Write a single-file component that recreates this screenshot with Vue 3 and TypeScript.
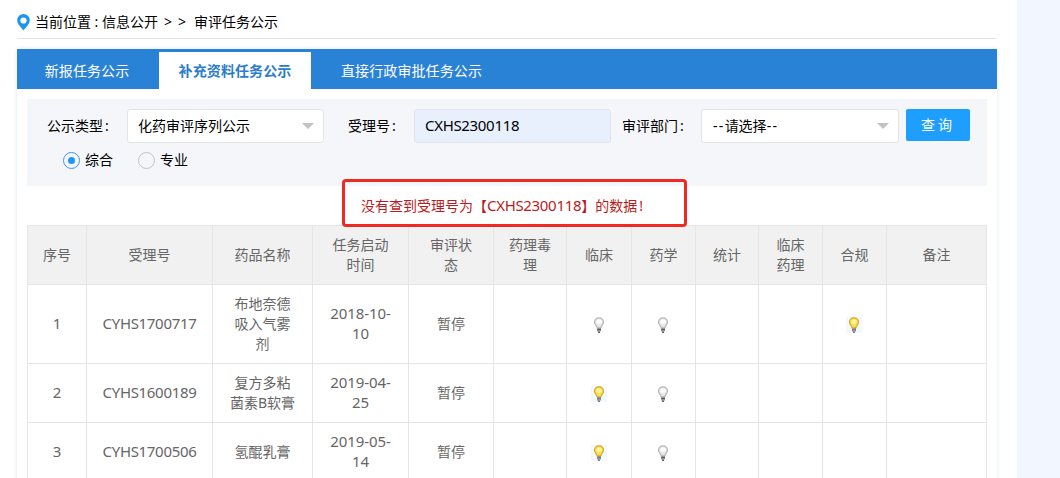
<script setup lang="ts">
import { ref } from 'vue'

type Lamp = 'on' | 'off' | ''
interface Row {
  id: number
  code: string
  name: string[]
  date: string[]
  status: string
  lamps: Lamp[]
}

const tabs = ['新报任务公示', '补充资料任务公示', '直接行政审批任务公示']
const activeTab = ref(1)
const scopes = ['综合', '专业']
const scope = ref(0)
const code = ref('CXHS2300118')

const widths = [59, 126, 100, 96, 85, 73, 65, 64, 63, 64, 64, 100]
const headers: string[][] = [
  ['序号'], ['受理号'], ['药品名称'], ['任务启动', '时间'], ['审评状', '态'], ['药理毒', '理'],
  ['临床'], ['药学'], ['统计'], ['临床', '药理'], ['合规'], ['备注'],
]
const rows: Row[] = [
  { id: 1, code: 'CYHS1700717', name: ['布地奈德', '吸入气雾', '剂'], date: ['2018-10-', '10'], status: '暂停', lamps: ['', 'off', 'off', '', '', 'on', ''] },
  { id: 2, code: 'CYHS1600189', name: ['复方多粘', '菌素B软膏'], date: ['2019-04-', '25'], status: '暂停', lamps: ['', 'on', 'off', '', '', '', ''] },
  { id: 3, code: 'CYHS1700506', name: ['氢醌乳膏'], date: ['2019-05-', '14'], status: '暂停', lamps: ['', 'on', 'off', '', '', '', ''] },
]
</script>

<template>
  <div class="page">
    <main class="sheet">
      <nav class="crumbs">
        <svg class="pin" width="13" height="17" viewBox="0 0 13 17">
          <path fill="#1e96ee" fill-rule="evenodd" d="M6.5 0A6.3 6.3 0 0 0 .2 6.3C.2 10 3.5 12.500 6.500 16.500 9.500 12.500 12.800 10 12.800 6.300A6.300 6.300 0 0 0 6.500 0ZM6.500 3.400A3.100 3.100 0 1 1 6.500 9.600 3.100 3.100 0 0 1 6.500 3.400Z" />
        </svg>
        <span>当前位置</span><span class="colon">:</span><span>信息公开</span>
        <span class="arrow first">&gt;</span><span class="arrow">&gt;</span><span>审评任务公示</span>
      </nav>

      <section class="panel">
        <div class="tabs">
          <button
            v-for="(tab, i) in tabs"
            :key="tab"
            class="tab"
            :class="{ active: i === activeTab }"
            @click="activeTab = i"
          >{{ tab }}</button>
        </div>

        <form class="filters" @submit.prevent>
          <div class="fields">
            <label class="label type">公示类型<i>:</i></label>
            <div class="select">化药审评序列公示<span class="caret"></span></div>
            <label class="label number">受理号<i>:</i></label>
            <input v-model="code" class="input latin" />
            <label class="label dept">审评部门<i>:</i></label>
            <div class="select wide"><span><b>--</b>请选择<b>--</b></span><span class="caret"></span></div>
            <button class="query">查询</button>
          </div>
          <div class="radios">
            <div v-for="(s, i) in scopes" :key="s" class="radio" :class="{ checked: i === scope }" @click="scope = i">
              <span class="ring"></span>{{ s }}
            </div>
          </div>
        </form>

        <div class="notice-row">
          <div class="notice">没有查到受理号为【<span class="latin">{{ 'CXHS2300118' }}</span>】的数据<span class="bang">!</span></div>
        </div>

        <table class="grid">
          <colgroup><col v-for="(w, i) in widths" :key="i" :style="{ width: w + 'px' }" /></colgroup>
          <thead>
            <tr>
              <th v-for="(h, i) in headers" :key="i"><div v-for="l in h" :key="l">{{ l }}</div></th>
            </tr>
          </thead>
          <tbody>
            <tr v-for="row in rows" :key="row.id">
              <td class="latin">{{ row.id }}</td>
              <td class="latin">{{ row.code }}</td>
              <td><div v-for="l in row.name" :key="l">{{ l }}</div></td>
              <td class="latin date"><div v-for="l in row.date" :key="l">{{ l }}</div></td>
              <td>{{ row.status }}</td>
              <td v-for="(lamp, i) in row.lamps" :key="i" class="lamp">
                <svg v-if="lamp" class="bulb" :class="lamp" width="16" height="16" viewBox="0 0 16 16">
                  <rect class="back" width="16" height="16" />
                  <path class="glass" d="M8 .8C5.200 .8 3.500 2.800 3.500 5.200 3.500 7.600 5.900 8.300 6.200 11H9.800C10.100 8.300 12.500 7.600 12.500 5.200 12.500 2.800 10.800 .8 8 .8Z" />
                  <ellipse class="shine" cx="8" cy="4.700" rx="2.700" ry="2.200" />
                  <path class="base" d="M6 10.800H10V14.500H9V15.800H7V14.500H6Z" />
                  <path class="thread" d="M6.500 12.500H10M7 15.300H9" />
                </svg>
              </td>
            </tr>
          </tbody>
        </table>
      </section>
    </main>
  </div>
</template>

<style>
html,
body {
  margin: 0;
  overflow: hidden;
}
</style>

<style scoped>
.page {
  box-sizing: border-box;
  width: 1060px;
  height: 478px;
  overflow: hidden;
  background: #f2f7ff;
  color: #000;
  font: 14px/20px "Noto Sans", "Noto Sans CJK SC", sans-serif;
}
.page *,
.page *::before {
  box-sizing: border-box;
}
.sheet {
  width: 1017px;
  height: 478px;
  padding: 0 20px 0 17px;
  background: #fff;
}
.crumbs {
  display: flex;
  align-items: center;
  height: 39px;
  padding-top: 5px;
  border-bottom: 1px solid #e4e4e4;
}
.pin {
  margin: 2px 5px 0 0;
}
.colon {
  width: 11px;
  text-align: center;
}
.arrow {
  width: 8px;
  margin-right: 8px;
}
.arrow.first {
  margin-left: 6px;
  margin-right: 6px;
}
.panel {
  height: 460px;
  margin-top: 10px;
  box-shadow: 0 0 4px rgba(70, 140, 170, 0.2);
}
.tabs {
  display: flex;
  height: 40px;
  padding-top: 3px;
  background: #2a82d7;
}
.tab {
  height: 37px;
  padding: 0 30px;
  border: 0;
  background: none;
  color: #fff;
  font: inherit;
  letter-spacing: 0.100px;
}
.tab:first-child {
  width: 142px;
  padding: 0 29px 0 27px;
}
.tab.active {
  width: 152px;
  padding: 0 19px;
  background: #fff;
  color: #2a7ccc;
  font-weight: bold;
}
.filters {
  height: 87px;
  margin: 10px 10px 0;
  padding: 10px 0 0 20px;
  background: #f4f6fa;
}
.fields {
  display: flex;
  height: 34px;
}
.label {
  flex: none;
  line-height: 34px;
}
.label i {
  margin-left: 2px;
  font-style: normal;
}
.type {
  width: 80px;
}
.number {
  width: 66px;
  margin-left: 24px;
}
.dept {
  width: 79px;
  margin-left: 11px;
}
.select,
.input {
  flex: none;
  width: 197px;
  height: 34px;
  border: 1px solid #e2e4e7;
  border-radius: 3px;
  background: #fff;
}
.select {
  display: flex;
  align-items: center;
  justify-content: space-between;
  padding: 0 9px 0 10px;
}
.select.wide {
  width: 198px;
  padding-left: 11px;
}
.select b {
  font-weight: normal;
  letter-spacing: 1.300px;
}
.caret {
  border: 6px solid transparent;
  border-top-color: #c2c2c2;
  border-bottom: 0;
}
.input {
  padding: 0 10px 2px;
  outline: 0;
  background: #e8f0fe;
  color: #000;
  font: inherit;
}
.latin {
  font-size: 15px;
  letter-spacing: -0.320px;
}
.date {
  letter-spacing: -0.050px;
}
.query {
  width: 64px;
  height: 32px;
  margin-left: 7px;
  padding: 0;
  border: 0;
  border-radius: 2px;
  background: #1e9fff;
  color: #fff;
  font: inherit;
  letter-spacing: 3px;
}
.radios {
  display: flex;
  padding-left: 15px;
  gap: 24px;
}
.radio {
  display: flex;
  align-items: center;
  height: 34px;
}
.ring {
  display: grid;
  place-items: center;
  width: 17px;
  height: 17px;
  margin: 0 5px 0 1px;
  border: 1.500px solid #c2c2c2;
  border-radius: 50%;
}
.checked .ring {
  border-color: #3a97e8;
}
.checked .ring::before {
  width: 7px;
  height: 7px;
  border-radius: 50%;
  background: #1e96f5;
  content: "";
}
.notice-row {
  height: 39px;
}
.notice {
  position: relative;
  top: -7px;
  left: 325px;
  width: 345px;
  height: 48px;
  padding: 5px 0 0 16px;
  border: 3px solid #ee2a22;
  border-radius: 4px;
  color: #b81c22;
  line-height: 36px;
  white-space: nowrap;
}
.bang {
  margin-left: 2px;
}
.grid {
  width: 960px;
  margin: 0 10px;
  border-top: 1px solid #e5e5e5;
  border-left: 1px solid #e5e5e5;
  border-spacing: 0;
  color: #666;
  table-layout: fixed;
}
.grid th,
.grid td {
  height: 59px;
  padding: 9px 0;
  border-right: 1px solid #e5e5e5;
  border-bottom: 1px solid #e5e5e5;
  font-weight: normal;
  text-align: center;
  vertical-align: middle;
}
.grid th {
  background: #f1f1f1;
}
.grid td.latin {
  padding: 8px 0 10px;
}
.grid td.lamp {
  padding-right: 1px;
}
.bulb {
  display: block;
  margin: 2px auto 0;
}
.back {
  fill: none;
}
.glass {
  fill: #e8e8e8;
  stroke: #b8b8b8;
  stroke-width: 1.200px;
}
.shine {
  fill: #fff;
}
.base {
  fill: #999;
}
.thread {
  fill: none;
  stroke: #555;
}
.on .back {
  fill: #f2f8fb;
}
.on .glass {
  fill: #ffe04a;
  stroke: #d9a92c;
}
.on .shine {
  fill: #fff3a0;
}
.on .thread {
  stroke: #777;
}
</style>
